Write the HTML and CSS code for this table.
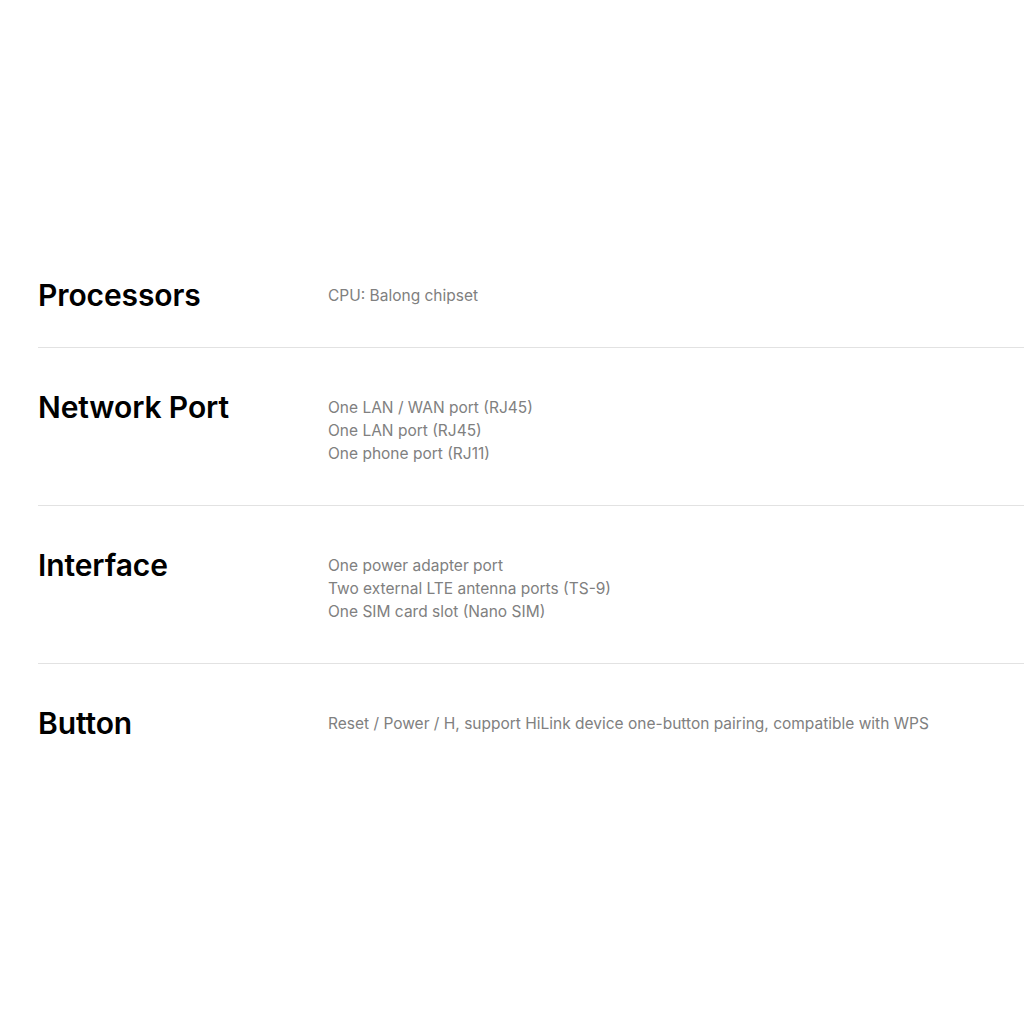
FILE: index.html
```html
<!DOCTYPE html>
<html lang="en">
<head>
<meta charset="utf-8">
<title>Specs</title>
<link rel="stylesheet" href="styles.css">
</head>
<body>
<main class="specs">
  <section class="row">
    <h2 class="label">Processors</h2>
    <div class="value"><p>CPU: Balong chipset</p></div>
  </section>
  <section class="row">
    <h2 class="label">Network Port</h2>
    <div class="value">
      <p>One LAN / WAN port (RJ45)</p>
      <p>One LAN port (RJ45)</p>
      <p>One phone port (RJ11)</p>
    </div>
  </section>
  <section class="row">
    <h2 class="label">Interface</h2>
    <div class="value">
      <p>One power adapter port</p>
      <p>Two external LTE antenna ports (TS-9)</p>
      <p>One SIM card slot (Nano SIM)</p>
    </div>
  </section>
  <section class="row">
    <h2 class="label">Button</h2>
    <div class="value"><p>Reset / Power / H, support HiLink device one-button pairing, compatible with WPS</p></div>
  </section>
</main>
</body>
</html>
```
FILE: styles.css
```css
html, body {
  margin: 0;
  padding: 0;
  background: #fff;
}
body {
  font-family: Inter, "Noto Sans", sans-serif;
}
.specs {
  padding-top: 236px;
  padding-left: 38px;
}
.row {
  display: flex;
  align-items: flex-start;
  padding: 48px 0 40px;
  border-bottom: 1px solid #e2e2e2;
}
.row:last-child {
  border-bottom: none;
}
.label {
  margin: 0;
  width: 290px;
  flex: none;
  font-size: 30px;
  line-height: 23px;
  font-weight: 600;
  color: #000;
  letter-spacing: -0.1px;
}
.value {
  font-size: 15.5px;
  line-height: 23px;
  color: #808080;
}
.value p {
  margin: 0;
}
```
